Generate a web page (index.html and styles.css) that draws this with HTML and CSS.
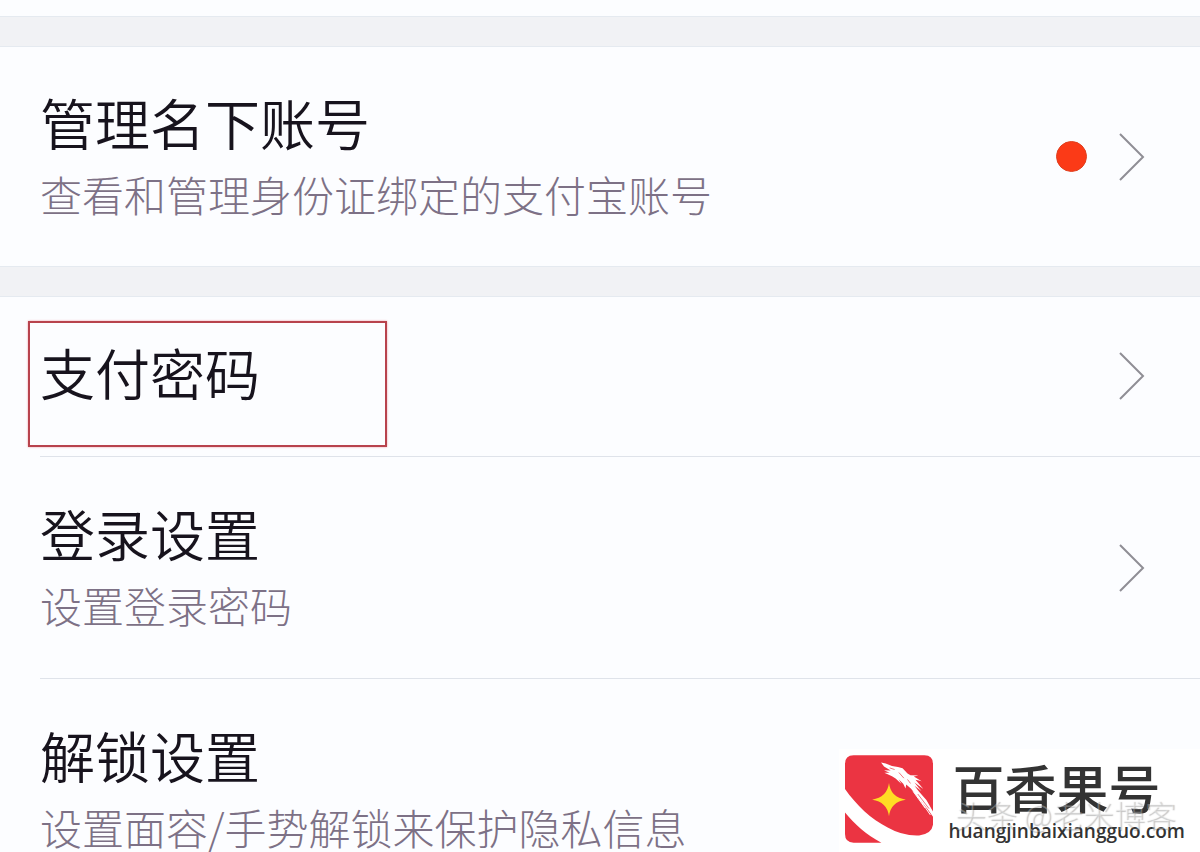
FILE: index.html
```
<!DOCTYPE html>
<html lang="zh-CN">
<head>
    <meta charset="UTF-8">
    <meta name="viewport" content="width=device-width, initial-scale=1.0">
    <title>安全设置</title>
    <link rel="stylesheet" href="styles.css">
</head>
<body>
    <main class="settings">
        <ul class="group">
            <li class="item">
                <a class="row" href="#accounts">
                    <span class="text">
                        <span class="title">管理名下账号</span>
                        <span class="desc">查看和管理身份证绑定的支付宝账号</span>
                    </span>
                    <span class="dot"></span>
                    <svg class="arrow" viewBox="0 0 26 48"><path d="M1 1 L24 24 L1 47"/></svg>
                </a>
            </li>
        </ul>
        <ul class="group">
            <li class="item">
                <a class="row" href="#pay-password">
                    <span class="text">
                        <span class="title">支付密码</span>
                    </span>
                    <svg class="arrow" viewBox="0 0 26 48"><path d="M1 1 L24 24 L1 47"/></svg>
                </a>
                <span class="highlight"></span>
            </li>
            <li class="item">
                <a class="row" href="#login">
                    <span class="text">
                        <span class="title">登录设置</span>
                        <span class="desc">设置登录密码</span>
                    </span>
                    <svg class="arrow" viewBox="0 0 26 48"><path d="M1 1 L24 24 L1 47"/></svg>
                </a>
            </li>
            <li class="item">
                <a class="row" href="#unlock">
                    <span class="text text-last">
                        <span class="title">解锁设置</span>
                        <span class="desc">设置面容/手势解锁来保护隐私信息</span>
                    </span>
                </a>
            </li>
        </ul>
    </main>

    <!-- Site badge over the bottom right corner -->
    <div class="badge">
        <svg class="logo" viewBox="16 20 266 264">
            <path fill="#eb3442" d="M16 46 Q16 20 42 20 H256 Q282 20 282 46 V230 Q278 258 240 262 Q190 264 145 238 C95 214 50 170 16 122 Z"/>
            <path fill="#eb3442" d="M16 193 C45 228 80 260 126 284 H42 Q16 284 16 258 Z"/>
            <path fill="#fff" d="M125 42 L139 45 L158 52 L176 55 L190 59 L205 75 L214 80 L238 81 L224 84 L248 98 L229 94 L253 122 L226 102 L247 128 L226 112 L240 130 L262 155 L282 190 V206 L266 183 L240 151 L215 120 L201 108 L199 120 L192 106 L178 92 L187 107 L169 90 L158 83 L135 73 L151 73 L134 65 L154 66 L134 54 Z"/>
            <path fill="none" stroke="#fff" stroke-width="3" d="M218 118 L246 145 M226 130 L274 200 M222 129 L258 179"/>
            <path fill="none" stroke="#eb3442" stroke-width="2" d="M151 58 L166 63 M179 72 L194 89 M205 93 L214 105 M236 137 L270 181"/>
            <path fill="#ffdc24" d="M149 104 Q154 148 200 154 Q154 160 149 204 Q143 160 98 154 Q143 148 149 104 Z"/>
        </svg>
        <div class="brand">
            <span class="brand-name">百香果号</span>
            <span class="brand-url">huangjinbaixiangguo.com</span>
        </div>
        <span class="credit">头条 @老米博客</span>
    </div>
</body>
</html>
```
FILE: styles.css
```
* {
    box-sizing: border-box;
}

body {
    margin: 0;
    min-height: 100vh;
    position: relative;
    background-color: #fcfdff;
    font-family: "Noto Sans CJK SC", sans-serif;
}

.settings {
    padding-top: 17px;
}

.group {
    list-style: none;
    margin: 0;
    padding: 0;
    border-top: 29px solid #f1f2f5;
    box-shadow: 0 -1px 0 #e5eaf0, inset 0 1px 0 #e5eaf0;
}

.item {
    position: relative;
}

.row {
    display: flex;
    align-items: center;
    padding: 0 55px 0 40px;
    color: #17131d;
    text-decoration: none;
}

/* Divider starts at the text, not at the screen edge */
.item + .item::before {
    content: "";
    display: block;
    height: 1px;
    margin-left: 40px;
    background-color: #dfe3ea;
}

.text {
    display: flex;
    flex-direction: column;
    gap: 13px;
    flex: 1;
    padding: 39px 0 49px;
}

.text-last {
    padding-bottom: 0;
}

.title {
    font-size: 55px;
    font-weight: 350;
    line-height: 72px;
}

.desc {
    font-size: 42px;
    font-weight: 300;
    line-height: 48px;
    color: #7d7186;
}

.dot {
    width: 31px;
    height: 31px;
    margin-right: 32px;
    border-radius: 50%;
    background-color: #fb3a17;
    border: 1px solid #e0401f;
}

.arrow {
    width: 26px;
    height: 48px;
    fill: none;
    stroke: #8f8e95;
    stroke-width: 2;
}

.highlight {
    position: absolute;
    top: 25px;
    left: 28px;
    width: 359px;
    height: 126px;
    border: 2px solid #b8434d;
    box-shadow: 0 0 2px #f0a0a5;
}

.badge {
    position: absolute;
    right: 0;
    bottom: 0;
    display: flex;
    align-items: center;
    gap: 15px;
    padding: 6px 15px 9px 6px;
    background-color: #fff;
}

.logo {
    width: 88px;
    height: 88px;
}

.brand {
    display: flex;
    flex-direction: column;
    color: #333;
}

.brand-name {
    padding-left: 4px;
    font-size: 52px;
    font-weight: 500;
    line-height: 64px;
}

.brand-url {
    font-family: "Open Sans", sans-serif;
    font-size: 19px;
    font-weight: 600;
    line-height: 24px;
}

.credit {
    position: absolute;
    right: 24px;
    bottom: 20px;
    font-size: 31px;
    font-weight: 300;
    line-height: 36px;
    color: rgba(255, 255, 255, 0.3);
    text-shadow: 1px 1px 1px rgba(80, 80, 80, 0.35);
}
```
